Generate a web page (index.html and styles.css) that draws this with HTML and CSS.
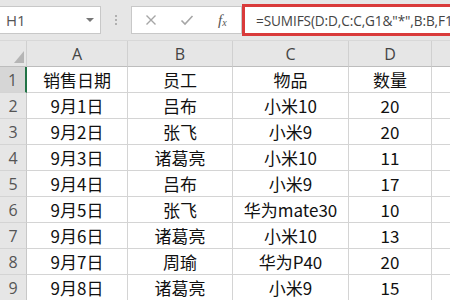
FILE: index.html
```html
<!DOCTYPE html>
<html>
<head>
<meta charset="utf-8">
<link rel="stylesheet" href="styles.css">
</head>
<body>
<div class="toolbar">
  <div class="namebox"><span class="name">H1</span><span class="caret"></span></div>
  <div class="sep"><i></i><i></i><i></i></div>
  <div class="btns">
    <svg class="ico" width="12" height="12" viewBox="0 0 12 12"><path d="M1.5 1.5 L10.5 10.5 M10.5 1.5 L1.5 10.5" stroke="#a6a6a6" stroke-width="1.4" fill="none"/></svg>
    <svg class="ico" width="14" height="12" viewBox="0 0 14 12"><path d="M1.5 6.5 L5 10 L12.5 2" stroke="#a6a6a6" stroke-width="1.6" fill="none"/></svg>
    <span class="fx">f<sub>x</sub></span>
  </div>
  <div class="formula">=SUMIFS(D:D,C:C,G1&amp;"*",B:B,F1</div>
</div>
<div class="grid">
  <div class="corner"><span class="tri"></span></div>
  <div class="ch">A</div><div class="ch">B</div><div class="ch">C</div><div class="ch">D</div><div class="ch last"></div>

  <div class="rh sel">1</div><div class="c">销售日期</div><div class="c">员工</div><div class="c">物品</div><div class="c">数量</div><div class="c last"></div>
  <div class="rh">2</div><div class="c">9月1日</div><div class="c">吕布</div><div class="c">小米10</div><div class="c">20</div><div class="c last"></div>
  <div class="rh">3</div><div class="c">9月2日</div><div class="c">张飞</div><div class="c">小米9</div><div class="c">20</div><div class="c last"></div>
  <div class="rh">4</div><div class="c">9月3日</div><div class="c">诸葛亮</div><div class="c">小米10</div><div class="c">11</div><div class="c last"></div>
  <div class="rh">5</div><div class="c">9月4日</div><div class="c">吕布</div><div class="c">小米9</div><div class="c">17</div><div class="c last"></div>
  <div class="rh">6</div><div class="c">9月5日</div><div class="c">张飞</div><div class="c">华为mate30</div><div class="c">10</div><div class="c last"></div>
  <div class="rh">7</div><div class="c">9月6日</div><div class="c">诸葛亮</div><div class="c">小米10</div><div class="c">13</div><div class="c last"></div>
  <div class="rh">8</div><div class="c">9月7日</div><div class="c">周瑜</div><div class="c">华为P40</div><div class="c">20</div><div class="c last"></div>
  <div class="rh">9</div><div class="c">9月8日</div><div class="c">诸葛亮</div><div class="c">小米9</div><div class="c">15</div><div class="c last"></div>
</div>
</body>
</html>
```
FILE: styles.css
```css
* { box-sizing: border-box; }
html, body { margin: 0; padding: 0; width: 450px; height: 300px; overflow: hidden; background: #fff; }
body { font-family: "Noto Sans CJK SC", "Noto Sans", sans-serif; }

.toolbar {
  height: 41px;
  background: #e6e6e6;
  display: flex;
  align-items: center;
  white-space: nowrap;
  overflow: hidden;
  border-bottom: 1px solid #d8d8d8;
}
.namebox {
  flex: none;
  width: 101px;
  height: 28px;
  background: #fff;
  border: 1px solid #c8c8c8;
  border-left: none;
  display: flex;
  align-items: center;
  justify-content: space-between;
  padding: 0 6px 0 6px;
}
.name { font-family: "Open Sans", "Noto Sans", sans-serif; font-size: 15px; color: #555; }
.caret {
  width: 0; height: 0;
  border-left: 4px solid transparent;
  border-right: 4px solid transparent;
  border-top: 4px solid #777;
}
.sep {
  flex: none;
  width: 30px;
  display: flex;
  flex-direction: column;
  align-items: center;
  gap: 2px;
}
.sep i { display: block; width: 2px; height: 2px; background: #b0b0b0; }
.btns {
  flex: none;
  width: 111px;
  height: 28px;
  background: #fff;
  border: 1px solid #c8c8c8;
  display: flex;
  align-items: center;
  padding-left: 13px;
}
.btns .ico:nth-child(1) { margin-right: 23px; }
.btns .ico:nth-child(2) { margin-right: 24px; }
.fx { font-family: "Liberation Serif", serif; font-style: italic; font-size: 15px; color: #555; }
.fx sub { font-size: 10px; vertical-align: -1px; }
.formula {
  flex: none;
  width: 226px;
  height: 32px;
  border: 3px solid #d93a3a;
  border-right: none;
  background: #fff;
  display: flex;
  align-items: center;
  padding-left: 11px;
  font-family: "Open Sans", "Noto Sans", sans-serif;
  font-size: 13.6px;
  letter-spacing: -0.1px;
  color: #444;
  overflow: hidden;
}

.grid {
  display: grid;
  grid-template-columns: 27px 101px 105px 116px 83px 1fr;
  grid-template-rows: 26px repeat(9, 26px);
}
.corner {
  background: #e6e6e6;
  border-right: 1px solid #d0d0d0;
  border-bottom: 1px solid #bdbdbd;
  position: relative;
}
.tri {
  position: absolute;
  right: 2px;
  bottom: 3px;
  width: 0; height: 0;
  border-left: 10px solid transparent;
  border-bottom: 12px solid #b5b5b5;
}
.ch {
  background: #e6e6e6;
  border-right: 1px solid #d0d0d0;
  border-bottom: 1px solid #bdbdbd;
  display: flex;
  align-items: center;
  justify-content: center;
  font-family: "Open Sans", "Noto Sans", sans-serif;
  font-size: 16px;
  color: #444;
}
.rh {
  background: #e6e6e6;
  border-right: 1px solid #c8c8c8;
  border-bottom: 1px solid #d4d4d4;
  display: flex;
  align-items: center;
  justify-content: center;
  font-family: "Open Sans", "Noto Sans", sans-serif;
  font-size: 16px;
  color: #555;
}
.rh.sel { background: #d6d6d6; border-right: 2px solid #217346; }
.c {
  border-right: 1px solid #d4d4d4;
  border-bottom: 1px solid #d4d4d4;
  display: flex;
  align-items: center;
  justify-content: center;
  font-size: 17px;
  color: #111;
  white-space: nowrap;
}
.last { border-right: none; }
```
